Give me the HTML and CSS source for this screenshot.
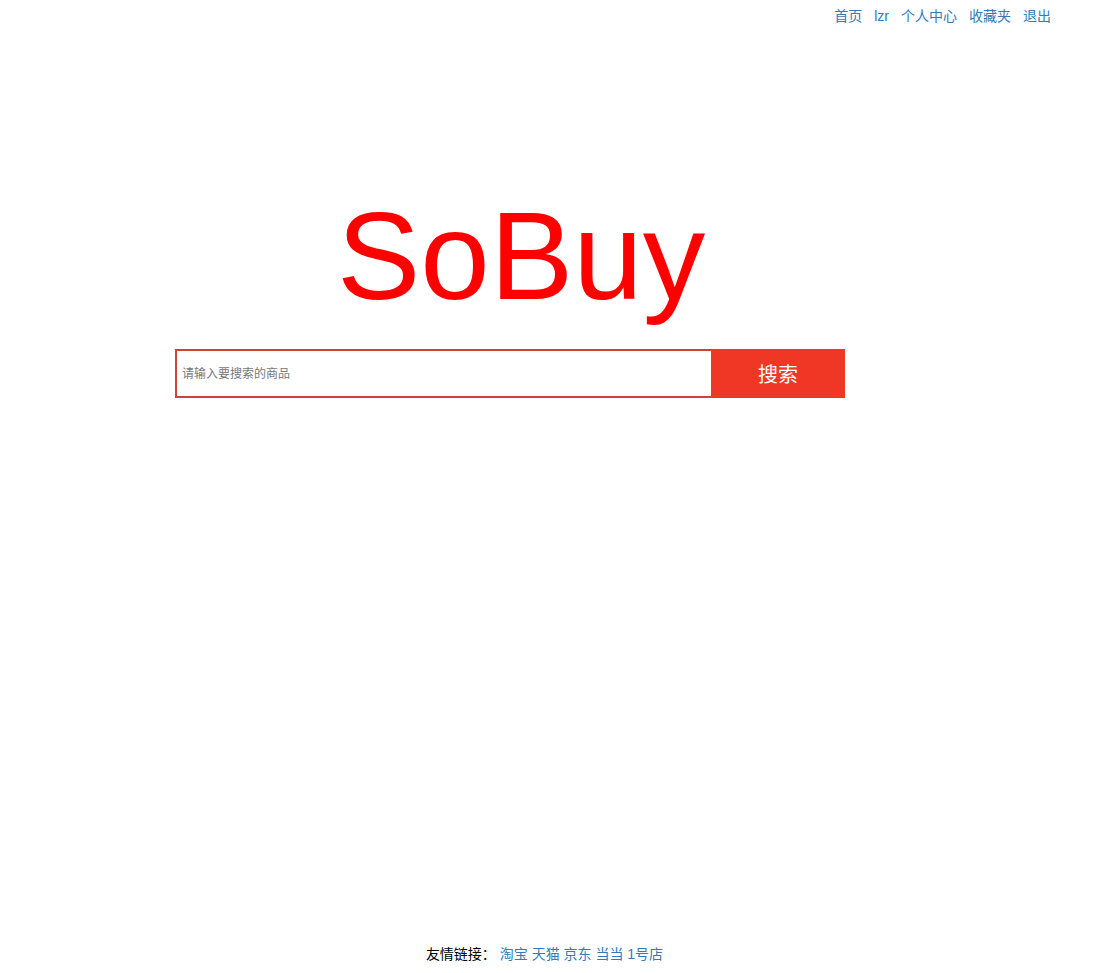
FILE: index.html
```html
<!DOCTYPE html>
<html lang="zh">
<head>
<meta charset="utf-8">
<title>SoBuy</title>
<link rel="stylesheet" href="styles.css">
</head>
<body>
<div class="page">
  <nav class="topnav">
    <a href="#">首页</a>
    <a href="#">lzr</a>
    <a href="#">个人中心</a>
    <a href="#">收藏夹</a>
    <a href="#">退出</a>
  </nav>
  <main class="main">
    <h1 class="logo">SoBuy</h1>
    <form class="search">
      <input class="search-input" type="text" placeholder="请输入要搜索的商品">
      <button class="search-btn" type="button">搜索</button>
    </form>
  </main>
  <footer class="footer">
    <span class="footer-label">友情链接：</span>
    <a href="#">淘宝</a>
    <a href="#">天猫</a>
    <a href="#">京东</a>
    <a href="#">当当</a>
    <a href="#">1号店</a>
  </footer>
</div>
</body>
</html>
```

FILE: styles.css
```css
* { box-sizing: border-box; }
html, body { margin: 0; padding: 0; background: #fff; }
body {
  font-family: "Liberation Sans", Arial, "Noto Sans CJK SC", sans-serif;
  font-size: 14px;
  color: #333;
}
a { color: #337ab7; text-decoration: none; }
.page {
  min-height: 100vh;
  display: flex;
  flex-direction: column;
}
.topnav {
  display: flex;
  justify-content: flex-end;
  gap: 12px;
  padding: 6px 58px 0 0;
  line-height: 20px;
}
.main {
  flex: 1;
  padding-top: 160px;
}
.logo {
  margin: 0 0 0 337px;
  font-family: "Liberation Sans", Arial, sans-serif;
  font-weight: normal;
  font-size: 125px;
  line-height: 140px;
  color: #ff0000;
}
.search {
  display: flex;
  margin: 23px 0 0 175px;
  width: 670px;
  height: 49px;
}
.search-input {
  flex: 1;
  height: 49px;
  border: 2px solid #d0413a;
  border-right: none;
  padding: 0 0 0 5px;
  font-size: 12px;
  font-family: "Liberation Sans", Arial, "Noto Sans CJK SC", sans-serif;
  outline: none;
}
.search-input::placeholder { color: #777; }
.search-btn {
  width: 134px;
  height: 49px;
  border: none;
  background: #f03726;
  color: #fff;
  font-size: 20px;
  font-family: "Liberation Sans", Arial, "Noto Sans CJK SC", sans-serif;
  padding: 0;
}
.footer {
  text-align: center;
  padding: 0 20px 9px 0;
  line-height: 20px;
  color: #000;
}
```
